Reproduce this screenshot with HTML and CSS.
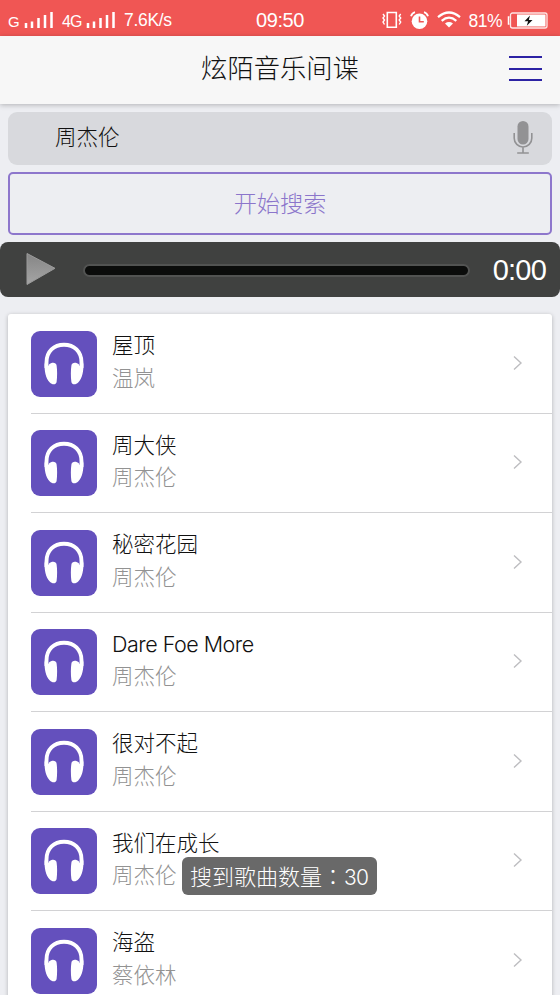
FILE: index.html
```html
<!DOCTYPE html>
<html lang="zh-CN">
<head>
<meta charset="utf-8">
<title>炫陌音乐间谍</title>
<link rel="stylesheet" href="styles.css">
</head>
<body>
<svg class="defs" aria-hidden="true">
  <symbol id="headphones" viewBox="0 0 66 66">
    <path d="M15.500 37V31.500C15.500 20.500 23 13.700 33 13.700S50.500 20.500 50.500 31.500V37" fill="none" stroke="#fff" stroke-width="3.900"/>
    <path d="M13.600 32C15 36 17.500 36 18 33.500C20.500 31 25.200 31 25.600 34.500C26.300 39 26.300 46 25.600 51C25.100 54 21 54 18.800 51.500C14.500 47 13.300 40 13.600 32Z" fill="#fff"/>
    <path d="M52.400 32C51 36 48.500 36 48 33.500C45.500 31 40.800 31 40.400 34.500C39.700 39 39.700 46 40.400 51C40.900 54 45 54 47.200 51.500C51.500 47 52.700 40 52.400 32Z" fill="#fff"/>
  </symbol>
  <symbol id="chevron" viewBox="0 0 10 16"><path d="M1 1.500L8 8L1 14.500" fill="none" stroke="#bdbdc0" stroke-width="1.400"/></symbol>
  <symbol id="signal" viewBox="0 0 30 18"><path d="M2 12v5M8 10.500V17M14.500 7v10M21 4v13M27.500 1v16" fill="none" stroke="#fff" stroke-width="2.500"/></symbol>
</svg>
<div class="screen">
  <div class="status">
    <div class="status-left">
      <span class="carrier">G</span><svg class="signal"><use href="#signal"/></svg>
      <span class="network">4G</span><svg class="signal"><use href="#signal"/></svg>
      <span class="speed">7.6K/s</span>
    </div>
    <span class="clock">09:50</span>
    <div class="status-right">
      <svg width="20" height="18" viewBox="0 0 20 18" fill="none" stroke="#fff" stroke-width="1.600"><path d="M5.300 1.500h9v14.800h-9z"/><path d="M1 3l1.500 2L1 7l1.500 2L1 11l1.500 2.500M18.700 3l-1.500 2 1.500 2-1.500 2 1.500 2-1.500 2.500" stroke-width="1.400"/></svg>
      <svg class="alarm" width="19" height="19" viewBox="0 0 19 19"><circle cx="9.500" cy="10.300" r="7.800" fill="#fff"/><path d="M9.500 5.500v5.300h4.300" fill="none" stroke="#f05654" stroke-width="1.600"/><path d="M1 5.300Q2 2 5 1.200M18 5.300Q17 2 14 1.200" fill="none" stroke="#fff" stroke-width="1.800"/></svg>
      <svg class="wifi" width="24" height="18" viewBox="0 0 24 18" fill="none" stroke="#fff" stroke-width="2.200"><path d="M1 6.200Q12-3.200 23 6.200M4.700 9.800Q12 3.600 19.300 9.800"/><path d="M8 12.500Q12 9.600 16 12.500L12 16.500Z" fill="#fff" stroke="none"/></svg>
      <span class="percent">81%</span>
      <svg class="battery" width="41" height="17" viewBox="0 0 41 17"><rect x="3.500" y="1" width="36.500" height="15" rx="2" fill="none" stroke="#fff" stroke-opacity=".85" stroke-width="1.300"/><path d="M2.500 5H1.500v7h1" fill="none" stroke="#fff" stroke-width="1.500"/><path d="M10 2.500h28.500v12H10z" fill="#fff"/><path d="M23 3.500L17.500 9.300h3.600L19.800 13.700 25.500 8h-3.700Z" fill="#111"/></svg>
    </div>
  </div>
  <header class="header">
    <h1>炫陌音乐间谍</h1>
    <button class="menu" aria-label="菜单"><i></i><i></i><i></i></button>
  </header>
  <main>
    <div class="search">
      <span>周杰伦</span>
      <svg width="20" height="34" viewBox="0 0 20 34" fill="none" stroke="#929294" stroke-width="1.600"><rect x="4.500" y="0" width="11" height="23.500" rx="5.500" fill="#929294" stroke="none"/><path d="M1.200 12v5.200a8.800 8.800 0 0 0 17.600 0V12M10 26v6M4.200 32h11.600"/></svg>
    </div>
    <button class="submit">开始搜索</button>
    <div class="player">
      <svg width="30" height="34" viewBox="0 0 30 34"><defs><linearGradient id="playfill" x2="0" y2="1"><stop stop-color="#858585"/><stop offset="1" stop-color="#a5a5a5"/></linearGradient></defs><path d="M1 1.500L29 16.300L1 32.500Z" fill="url(#playfill)" stroke="#9b9b9b" stroke-linejoin="round"/></svg>
      <div class="track"></div>
      <span class="time">0:00</span>
    </div>
    <ul class="songs">
      <li><svg class="cover"><use href="#headphones"/></svg><div class="row"><div><b>屋顶</b><p>温岚</p></div><svg class="chevron"><use href="#chevron"/></svg></div></li>
      <li><svg class="cover"><use href="#headphones"/></svg><div class="row"><div><b>周大侠</b><p>周杰伦</p></div><svg class="chevron"><use href="#chevron"/></svg></div></li>
      <li><svg class="cover"><use href="#headphones"/></svg><div class="row"><div><b>秘密花园</b><p>周杰伦</p></div><svg class="chevron"><use href="#chevron"/></svg></div></li>
      <li><svg class="cover"><use href="#headphones"/></svg><div class="row"><div><b class="latin">Dare Foe More</b><p>周杰伦</p></div><svg class="chevron"><use href="#chevron"/></svg></div></li>
      <li><svg class="cover"><use href="#headphones"/></svg><div class="row"><div><b>很对不起</b><p>周杰伦</p></div><svg class="chevron"><use href="#chevron"/></svg></div></li>
      <li><svg class="cover"><use href="#headphones"/></svg><div class="row"><div><b>我们在成长</b><p>周杰伦</p></div><svg class="chevron"><use href="#chevron"/></svg></div></li>
      <li><svg class="cover"><use href="#headphones"/></svg><div class="row"><div><b>海盗</b><p>蔡依林</p></div><svg class="chevron"><use href="#chevron"/></svg></div></li>
    </ul>
  </main>
  <div class="toast">搜到歌曲数量<span class="colon" lang="zh-TW">：</span><span class="count">30</span></div>
</div>
</body>
</html>
```

FILE: styles.css
```css
* { box-sizing: border-box; }
body { margin: 0; background: #edeef2; font-family: "Noto Sans CJK SC", sans-serif; font-weight: 300; color: #111; }
h1, p, ul { margin: 0; padding: 0; }
button { font: inherit; padding: 0; background: none; border: 0; }
svg { display: block; flex: none; }
.defs { position: absolute; width: 0; height: 0; }
.screen { position: relative; width: 560px; height: 995px; overflow: hidden; }

.status { height: 36px; display: grid; grid-template-columns: 1fr auto 1fr; align-items: center; background: #f05654; color: #fff; font: 400 17.5px/36px "Liberation Sans", sans-serif; }
.status-left { display: flex; align-items: center; padding-left: 8px; }
.status-right { display: flex; align-items: center; justify-content: flex-end; padding-right: 12px; }
.signal { width: 30px; height: 18px; margin-top: -1px; }
.carrier { width: 16px; font-size: 15px; padding-top: 4px; }
.network { width: 24px; margin-left: 8px; font-size: 16px; letter-spacing: -.8px; padding-top: 4px; }
.speed { margin-left: 8px; letter-spacing: -.3px; white-space: nowrap; }
.clock { font-size: 20px; letter-spacing: -.4px; }
.alarm { margin-left: 8px; }
.wifi { margin-left: 8px; }
.percent { margin: 0 5px 0 7px; letter-spacing: -.5px; padding-top: 1px; }

.header { position: relative; height: 68px; display: flex; align-items: center; justify-content: center; background: #f7f7f7; box-shadow: 0 1px 5px rgba(0, 0, 0, .25); }
.header h1 { font-size: 26.3px; line-height: 40px; font-weight: 300; padding-bottom: 6px; }
.menu { position: absolute; right: 18px; top: 20px; width: 33px; height: 25px; display: flex; flex-direction: column; justify-content: space-between; }
.menu i { display: block; width: 33px; height: 2px; background: #2c22a4; }

.search { height: 53px; margin: 8px 8px 0; padding: 0 19px 2px 47px; display: flex; align-items: center; justify-content: space-between; border-radius: 9px; background: #d8d9dd; font-size: 21.5px; }
.search span { padding-bottom: 4px; }
.submit { display: block; width: 544px; height: 63px; margin: 7px 8px 0; border: 2px solid #8d76cc; border-radius: 5px; color: #8b75cb; font-size: 23.2px; line-height: 52px; padding-bottom: 3px; }
.player { height: 55px; margin-top: 7px; padding: 0 14px 1px 26px; display: flex; align-items: center; border-radius: 8px; background: #404140; }
.track { flex: none; width: 387px; height: 13px; margin: 2px 0 0 27px; border: 2px solid #525352; border-radius: 7px; background: #0b0c0b; }
.time { flex: 1; text-align: right; color: #fff; font: 400 29px/50px "Liberation Sans", sans-serif; letter-spacing: -.8px; padding-top: 1px; white-space: nowrap; }

.songs { list-style: none; margin: 17px 8px 0; background: #fff; border-radius: 3px; box-shadow: 0 1px 4px rgba(0, 0, 0, .25); }
.songs li { height: 99.5px; padding-left: 23px; display: flex; align-items: center; position: relative; }
.cover { width: 66px; height: 66px; border-radius: 9px; background: #6450bd; }
.songs li::after { content: ""; position: absolute; left: 23px; right: 0; bottom: 0; height: 1px; background: #d2d2d4; }
.row { flex: 1; padding: 0 29px 6px 15px; display: flex; align-items: center; justify-content: space-between; }
.row b, .row p { display: block; height: 32.5px; font-size: 21.5px; line-height: 32.5px; font-weight: 300; }
.row p { color: #929292; }
.row .latin { font-family: Inter, sans-serif; font-size: 21.5px; letter-spacing: -.5px; line-height: 35px; }
.chevron { width: 10px; height: 16px; margin-top: 4px; }

.toast { position: absolute; left: 182px; top: 857px; width: 195px; height: 38px; border-radius: 6px; background: #696969; color: #fff; font-size: 22px; line-height: 36px; padding-left: 8px; white-space: nowrap; }
.colon { font-family: "Noto Sans CJK TC", sans-serif; }
.count { font-family: Inter, sans-serif; font-size: 21px; letter-spacing: -.8px; }
```
